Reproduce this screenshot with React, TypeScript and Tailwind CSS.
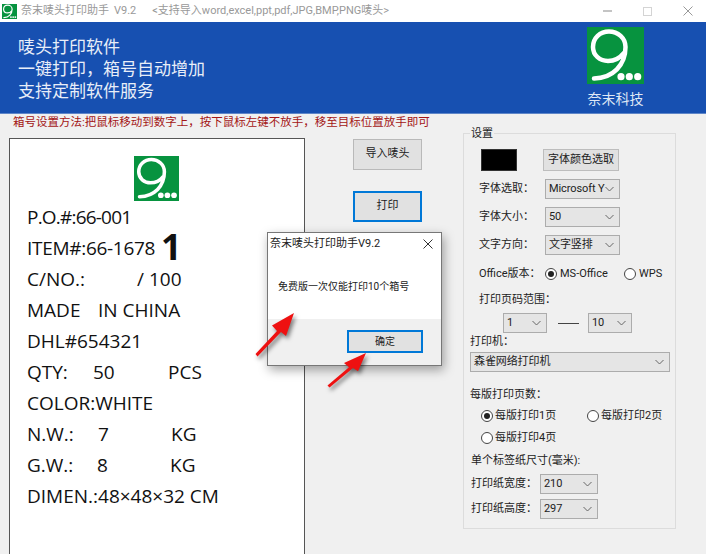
const ui = "font-['Roboto','Noto_Sans_CJK_SC',sans-serif]";
const labelFont = "font-['Open_Sans','Noto_Sans_CJK_SC',sans-serif]";

function Logo({ size }: { size: number }) {
    return (
        <svg width={size} height={size} viewBox="0 0 57 57" className="block">
            <rect width="57" height="57" fill="#07933f" />
            <path d="M7 51.5 C26 51 38.5 38 38.5 20 C38.5 11 31 4.5 22 4.5 C13 4.5 6 11 6 20 C6 28.5 13 34 21 34 C27 34 33 31 37 26" fill="none" stroke="white" strokeWidth="4.5" strokeLinecap="round" />
            <circle cx="34" cy="49.7" r="3.6" fill="white" />
            <circle cx="42.3" cy="49.7" r="3.6" fill="white" />
            <circle cx="50.7" cy="49.7" r="3.6" fill="white" />
        </svg>
    );
}

function Select({ value, w, h = 20 }: { value: string; w: number; h?: number }) {
    return (
        <div className="flex items-center justify-between border border-[#acacac] bg-[#e5e5e5] pl-[3px] pr-[5px] text-[11px] text-[#222] shrink-0" style={{ width: w, height: h }}>
            <span className="whitespace-nowrap tracking-[-0.1px]">{value}</span>
            <svg width="9" height="6" viewBox="0 0 9 6" className="shrink-0"><path d="M0.5 1 L4.5 5 L8.5 1" fill="none" stroke="#666" strokeWidth="1" /></svg>
        </div>
    );
}

function Radio({ on, label, gap = 3 }: { on?: boolean; label: string; gap?: number }) {
    return (
        <div className="flex items-center text-[11px] text-[#222]" style={{ gap }}>
            <span className="w-[12px] h-[12px] rounded-full border border-[#444] bg-white flex items-center justify-center">
                {on && <span className="w-[6px] h-[6px] rounded-full bg-[#222]"></span>}
            </span>
            <span className="whitespace-nowrap">{label}</span>
        </div>
    );
}

function Arrow({ className, w, h }: { className: string; w: number; h: number }) {
    return (
        <svg width={w} height={h} viewBox="0 0 40 44" preserveAspectRatio="none" className={`drop-shadow-[2px_3px_2px_rgba(0,0,0,0.5)] ${className}`}>
            <path d="M0.5 41 L22 18 L17 12.5 L39 0 L31 23 L26 19 L2.5 43.5 Z" fill="#ee1111" />
        </svg>
    );
}

// text plus the width of its column, so the values line up like the reference
const labelRows: [string, number][][] = [
    [["P.O.#:66-001", 0]],
    [],
    [["C/NO.:", 110], ["/ 100", 0]],
    [["MADE", 71], ["IN CHINA", 0]],
    [["DHL#654321", 0]],
    [["QTY:", 66], ["50", 75], ["PCS", 0]],
    [["COLOR:WHITE", 0]],
    [["N.W.:", 71], ["7", 73], ["KG", 0]],
    [["G.W.:", 70], ["8", 73], ["KG", 0]],
    [["DIMEN.:48×48×32 CM", 0]],
];

export default function App() {
    return (
        <div className={`relative w-[706px] h-[554px] overflow-hidden bg-[#f0f0f0] ${ui}`}>
            {/* title bar */}
            <div className="h-[22px] bg-white flex items-center pl-[2px] text-[11px] text-[#999]">
                <div className="w-[15px] h-[15px] mr-[4px] shrink-0"><Logo size={15} /></div>
                <span className="whitespace-nowrap">奈末唛头打印助手</span>
                <span className="ml-[5px] whitespace-nowrap">V9.2</span>
                <span className="ml-[16px] whitespace-nowrap">&lt;支持导入word,excel,ppt,pdf,JPG,BMP,PNG唛头&gt;</span>
                <div className="ml-auto flex items-center gap-[31px] pr-[13px]">
                    <span className="w-[9px] h-[2px] bg-[#c4c4c4]"></span>
                    <span className="w-[9px] h-[9px] border border-[#d4d4d4]"></span>
                    <svg width="10" height="10" viewBox="0 0 10 10"><path d="M0.5 0.5 L9.5 9.5 M9.5 0.5 L0.5 9.5" stroke="#999" strokeWidth="1" /></svg>
                </div>
            </div>

            {/* banner */}
            <div className="h-[92px] bg-[#1750b1] border-b border-[#5f86c8] flex justify-between pl-[18px] pr-[62px]">
                <div className="pt-[14px] text-[17px] leading-[22px] text-[#e8eef8]">
                    <div>唛头打印软件</div>
                    <div>一键打印，箱号自动增加</div>
                    <div>支持定制软件服务</div>
                </div>
                <div className="flex flex-col items-center pt-[5px]">
                    <Logo size={57} />
                    <div className="mt-[5px] text-[14px] leading-[20px] text-[#dfe7f5]">奈末科技</div>
                </div>
            </div>

            <div className="pl-[13px] h-[18px] text-[11.5px] leading-[17px] text-[#a31515] whitespace-nowrap">箱号设置方法:把鼠标移动到数字上，按下鼠标左键不放手，移至目标位置放手即可</div>

            <div className="flex items-start">
                {/* label preview */}
                <div className={`ml-[9px] mt-[6px] w-[296px] h-[418px] shrink-0 border border-[#555] border-b-0 bg-white pl-[17px] pt-[17px] text-[#111] text-[19px] ${labelFont}`}>
                    <div className="ml-[107px] mb-[1px] w-[45px]"><Logo size={45} /></div>
                    {labelRows.map((row, i) => (
                        <div key={i} className={`flex h-[31px] leading-[31px] whitespace-nowrap ${i === 0 ? "tracking-[-0.8px]" : ""}`}>
                            {i === 1 ? (
                                <><span className="tracking-[-0.3px]">ITEM#:66-1678</span><span className="ml-[6px] text-[36px] font-bold leading-[28px]">1</span></>
                            ) : row.map(([text, w], j) => (
                                <span key={j} style={w ? { width: w } : undefined}>{text}</span>
                            ))}
                        </div>
                    ))}
                </div>

                {/* buttons */}
                <div className="ml-[48px] mt-[7px] w-[69px] flex flex-col gap-[21px] shrink-0 text-[11px] text-[#222]">
                    <div className="h-[31px] bg-[#e1e1e1] border border-[#b9b9b9] flex items-center justify-center">导入唛头</div>
                    <div className="h-[31px] bg-[#e1e1e1] border-2 border-[#0078d7] flex items-center justify-center">打印</div>
                </div>

                {/* settings */}
                <div className="relative ml-[41px] mt-[1px] w-[213px] h-[396px] shrink-0 border border-[#dcdcdc] text-[11px] text-[#222]">
                    <span className="absolute left-[6px] -top-[7px] bg-[#f0f0f0] px-[1px] leading-[14px]">设置</span>
                    <div className="flex items-center pl-[17px] pt-[15px]">
                        <span className="w-[36px] h-[22px] bg-black border border-[#333]"></span>
                        <span className="ml-[26px] w-[76px] h-[22px] bg-[#e1e1e1] border border-[#bdbdbd] flex items-center justify-center">字体颜色选取</span>
                    </div>
                    <div className="flex items-center h-[20px] mt-[8px] pl-[15px]"><span className="w-[66px]">字体选取：</span><Select value="Microsoft Y" w={75} /></div>
                    <div className="flex items-center h-[20px] mt-[8px] pl-[15px]"><span className="w-[66px]">字体大小：</span><Select value="50" w={75} /></div>
                    <div className="flex items-center h-[20px] mt-[8px] pl-[15px]"><span className="w-[66px]">文字方向：</span><Select value="文字竖排" w={75} /></div>
                    <div className="flex items-center h-[20px] mt-[9px] pl-[15px]">
                        <span className="w-[66px] whitespace-nowrap">Office版本：</span>
                        <span className="w-[79px]"><Radio on label="MS-Office" /></span>
                        <Radio label="WPS" />
                    </div>
                    <div className="h-[18px] leading-[18px] mt-[7px] pl-[15px]">打印页码范围：</div>
                    <div className="flex items-center mt-[4px] pl-[39px]">
                        <Select value="1" w={44} />
                        <span className="ml-[11px] w-[21px] h-[1px] bg-[#444]"></span>
                        <span className="ml-[9px]"><Select value="10" w={44} /></span>
                    </div>
                    <div className="h-[16px] leading-[16px] mt-[1px] pl-[6px]">打印机：</div>
                    <div className="pl-[6px] mt-[2px]"><Select value="森雀网络打印机" w={200} /></div>
                    <div className="h-[18px] leading-[18px] mt-[14px] pl-[6px]">每版打印页数：</div>
                    <div className="flex mt-[1px] pl-[17px] h-[22px] items-center">
                        <span className="w-[106px]"><Radio on label="每版打印1页" gap={2} /></span>
                        <Radio label="每版打印2页" gap={2} />
                    </div>
                    <div className="flex pl-[17px] h-[22px] items-center"><Radio label="每版打印4页" gap={2} /></div>
                    <div className="h-[18px] leading-[18px] mt-[3px] pl-[7px]">单个标签纸尺寸(毫米):</div>
                    <div className="flex items-center mt-[4px] pl-[7px]"><span className="w-[69px] whitespace-nowrap">打印纸宽度：</span><Select value="210" w={58} /></div>
                    <div className="flex items-center mt-[5px] pl-[7px]"><span className="w-[69px] whitespace-nowrap">打印纸高度：</span><Select value="297" w={58} /></div>
                </div>
            </div>

            {/* message box */}
            <div className="absolute left-[267px] top-[232px] w-[175px] h-[134px] border border-[#777] bg-[#f0f0f0] shadow-[2px_4px_10px_rgba(0,0,0,0.35)] text-[11px] text-[#222]">
                <div className="h-[86px] bg-white">
                    <div className="flex items-center justify-between h-[22px] pl-[2px] pr-[8px]">
                        <span className="whitespace-nowrap">奈末唛头打印助手V9.2</span>
                        <svg width="10" height="10" viewBox="0 0 10 10"><path d="M0.5 0.5 L9.5 9.5 M9.5 0.5 L0.5 9.5" stroke="#333" strokeWidth="1" /></svg>
                    </div>
                    <div className="pl-[10px] pt-[24px] text-[10px] leading-[16px] whitespace-nowrap">免费版一次仅能打印10个箱号</div>
                </div>
                <div className="flex justify-end pt-[11px] pr-[18px]">
                    <div className="w-[76px] h-[23px] bg-[#e1e1e1] border-2 border-[#0078d7] flex items-center justify-center text-[10px]">确定</div>
                </div>
            </div>

            <Arrow className="absolute left-[255px] top-[313px]" w={40} h={44} />
            <Arrow className="absolute left-[327px] top-[353px]" w={40} h={35} />
        </div>
    );
}
